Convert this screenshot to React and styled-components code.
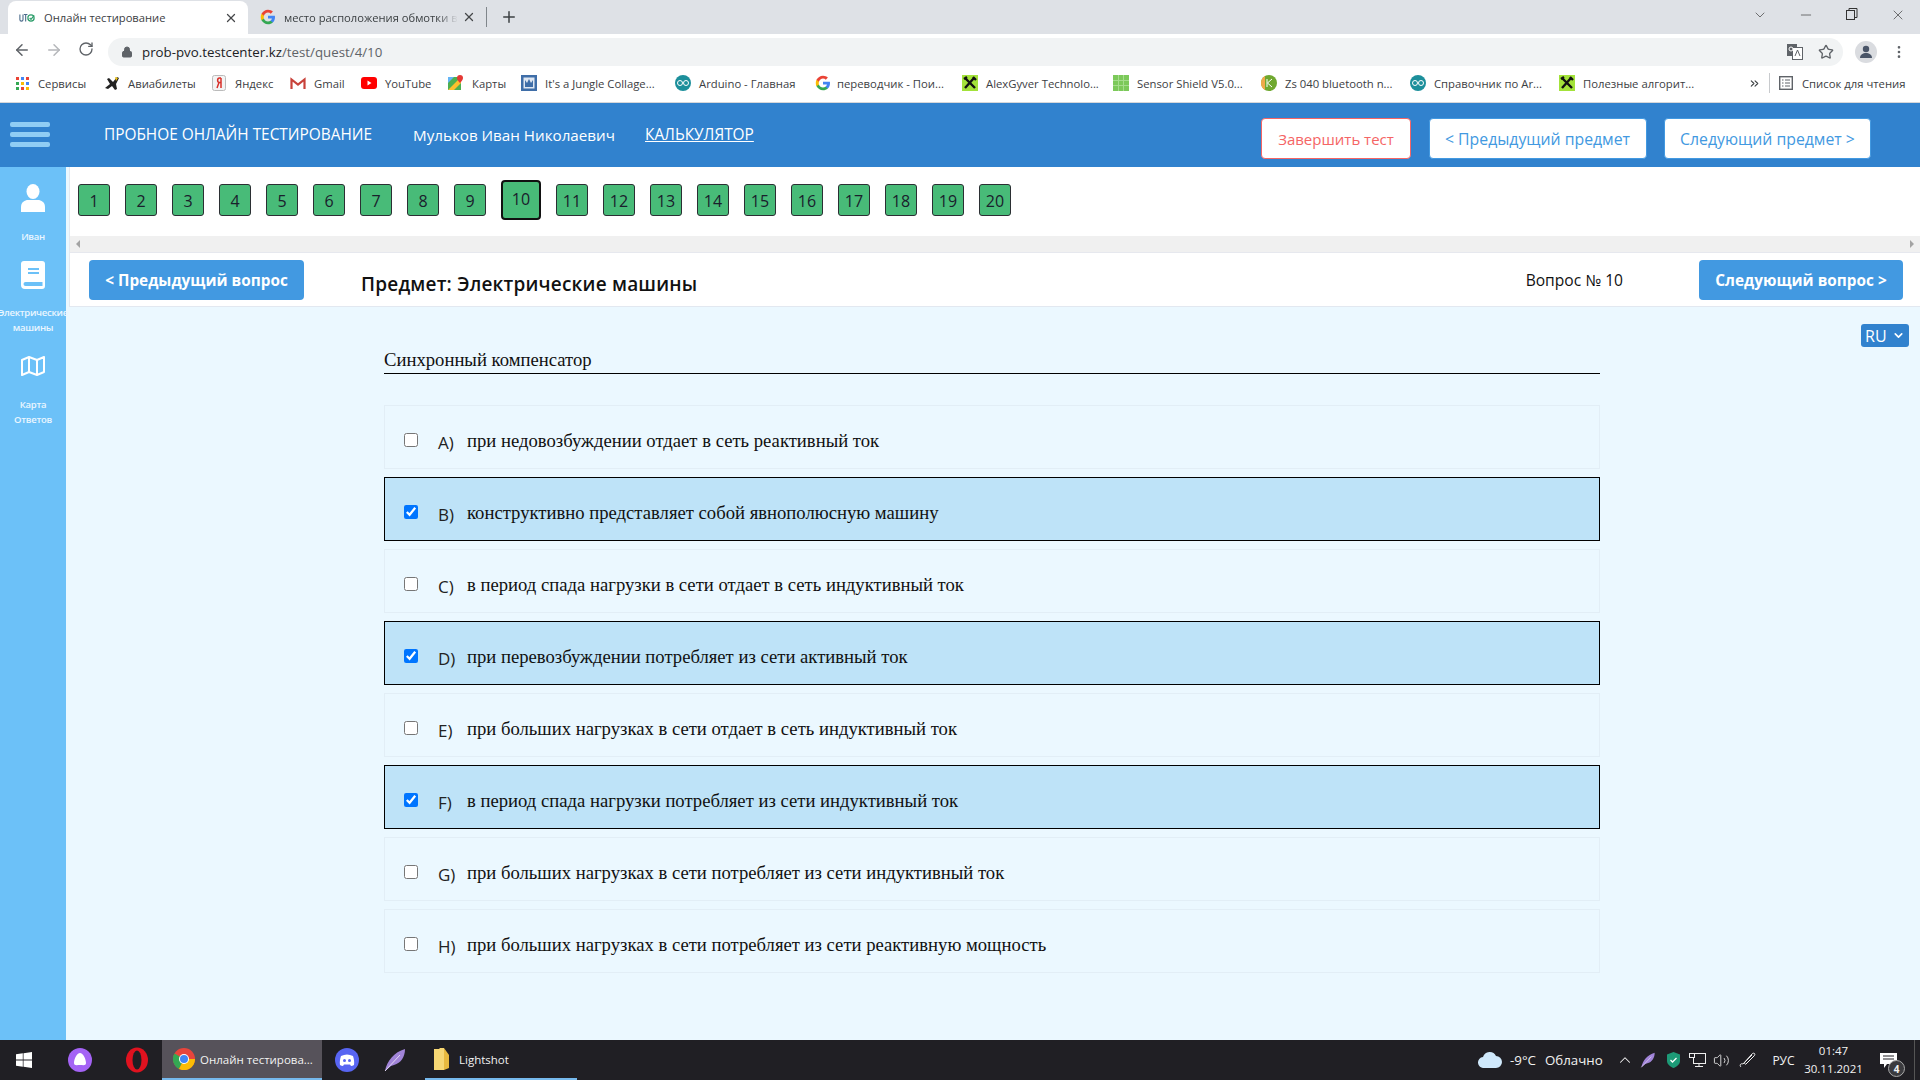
import React from 'react';
import styled, { createGlobalStyle } from 'styled-components';
import { ArrowLeft, ArrowRight, RotateCw, Lock, Star, X, Plus, ChevronDown, Minus, EllipsisVertical, ChevronsRight, ChevronUp, Volume2 } from 'lucide-react';

const Global = createGlobalStyle`
  html, body { margin: 0; padding: 0; width: 1920px; height: 1080px; overflow: hidden; background: #ebf8ff; }
  * { box-sizing: border-box; }
  body { font-family: "Open Sans", "Noto Sans", sans-serif; }
`;

const Page = styled.div`display: flex; flex-direction: column; width: 1920px; height: 1080px; overflow: hidden;`;

/* Browser chrome */
const TabStrip = styled.div`display: flex; align-items: flex-end; height: 34px; background: #dee1e6; padding-left: 8px; color: #3c4043; font-size: 11.2px;`;
const Tab = styled.div`
  display: flex; align-items: center; height: ${p => p.$active ? 33 : 34}px; width: ${p => p.$w}px; padding-left: ${p => p.$pl}px; position: relative;
  background: ${p => p.$active ? '#fff' : 'transparent'}; border-radius: 8px 8px 0 0;
`;
const Favicon = styled.span`display: inline-flex; width: 16px; height: 16px; align-items: center; justify-content: center; flex: none;`;
const TabTitle = styled.span`margin-left: ${p => p.$ml ?? 8}px; white-space: nowrap; flex: 1; min-width: 0; ${p => p.$fade && 'mask-image: linear-gradient(90deg, #000 88%, transparent 100%);'}`;
const TabClose = styled.span`display: inline-flex; width: 16px; margin: 0 8px 0 4px; color: #45474a;`;
const TabSep = styled.span`width: 1px; height: 20px; background: #80868b; margin: 0 13px 7px 0;`;
const NewTab = styled.span`display: inline-flex; margin-bottom: 8px; color: #3c4043;`;
const WindowCtrls = styled.div`margin-left: auto; display: flex; align-self: flex-start; padding-top: 7px; color: #333;`;
const WinBtn = styled.span`display: inline-flex; justify-content: center; width: ${p => p.$w}px;`;

const Toolbar = styled.div`display: flex; align-items: center; height: 32px; background: #fff; color: #5f6368;`;
const NavBtn = styled.span`display: inline-flex; justify-content: center; width: 32px; color: ${p => p.$dim ? '#b5b7ba' : '#5f6368'};`;
const NavGroup = styled.div`display: flex; padding-left: 6px; width: 108px; gap: 0;`;
const Omnibox = styled.div`display: flex; align-items: center; width: 1735px; height: 28px; margin-top: 4px; background: #f1f3f4; border-radius: 14px; padding: 0 9px 0 13px; font-size: 13.3px;`;
const Url = styled.span`margin-left: 9px; color: #5f6368; b { font-weight: 400; color: #202124; }`;
const OmniIcons = styled.div`margin-left: auto; display: flex; align-items: center; gap: 15px;`;
const Avatar = styled.span`display: flex; align-items: center; justify-content: center; width: 22px; height: 22px; border-radius: 50%; background: #dadce0; margin-left: 12px; margin-top: 4px;`;
const Dots = styled.span`display: inline-flex; justify-content: center; width: 32px; margin-top: 4px; margin-left: 6px; color: #5f6368;`;

const Bookmarks = styled.div`display: flex; align-items: center; height: 37px; padding: 0 0 2px 14px; background: #fff; border-bottom: 1px solid #d5d7da; font-size: 11.3px; color: #3c4043;`;
const Bookmark = styled.div`display: flex; align-items: center; width: ${p => p.$w}px; flex: none; white-space: nowrap; overflow: hidden;`;
const BookmarkIcon = styled.span`display: inline-flex; width: 16px; height: 16px; flex: none; margin-right: ${p => p.$mr ?? 8}px; align-items: center; justify-content: center;`;
const BookSep = styled.span`width: 1px; height: 20px; background: #c8cacd; margin: 0 8px 0 8px;`;

/* Site */
const Header = styled.header`display: flex; align-items: center; height: 64px; background: #3182ce; color: #fff; padding: 0 49px 0 10px; font-size: 15.4px;`;
const Burger = styled.div`display: flex; flex-direction: column; gap: 5px; width: 40px; margin-right: 54px; margin-top: -1px; span { display: block; height: 5px; border-radius: 2px; background: #90cdf4; }`;
const HeaderText = styled.span`width: ${p => p.$w}px; flex: none; margin-top: -1px; white-space: nowrap; ${p => p.$link && 'text-decoration: underline;'} ${p => p.$fs && `font-size: ${p.$fs}px;`}`;
const HeaderBtns = styled.div`margin-left: auto; display: flex; gap: 17.5px; margin-top: 7px;`;
const HeaderBtn = styled.button`
  height: 41px; width: ${p => p.$w}px; padding: 1px 0 0; background: #fff; border: 1px solid ${p => p.$danger ? '#f56565' : '#4299e1'}; border-radius: 4px;
  color: ${p => p.$danger ? '#f56565' : '#4299e1'}; font: 400 ${p => p.$danger ? 15 : 15.8}px "Open Sans", sans-serif; white-space: nowrap;
`;

const Body = styled.div`display: flex; flex: 1; min-height: 0;`;
const Sidebar = styled.aside`position: relative; z-index: 1; width: 66px; flex: none; background: #6cc1f8; padding-top: 17px; display: flex; flex-direction: column; align-items: center; gap: 17px; color: #fff;`;
const SideItem = styled.div`display: flex; flex-direction: column; align-items: center; width: 66px;`;
const SideIcon = styled.span`display: flex; align-items: center; justify-content: center; height: 28px; margin-bottom: 16.5px; color: #fff;`;
const SideLabel = styled.span`font-size: 9.5px; line-height: 15px; white-space: nowrap; text-align: center; font-weight: 600; color: #eaf6ff; letter-spacing: -0.3px;`;

const Main = styled.main`flex: 1; min-width: 0; padding-left: 3px; display: flex; flex-direction: column; background: #ebf8ff;`;
const TopPanel = styled.section`border-left: 1px solid #e2e8f0; border-bottom: 1px solid #e2e8f0; background: #fff;`;
const NumberRow = styled.nav`display: flex; align-items: center; gap: 15px; height: 69px; padding: 0 0 3px 8px;`;
const NumberBox = styled.span`
  display: flex; align-items: center; justify-content: center; flex: none;
  width: ${p => p.$current ? 40 : 32}px; height: ${p => p.$current ? 40 : 32}px;
  background: #48bb78; border: ${p => p.$current ? '2px solid #111' : '1px solid #2b2f33'}; border-radius: ${p => p.$current ? 4 : 3}px;
  font-size: 16px; color: #1a202c;
  padding: ${p => p.$current ? '0 0 3px' : '1px 0 0'};
`;
const ScrollBar = styled.div`display: flex; align-items: center; justify-content: space-between; height: 17px; padding: 0 6px; background: #f0f0f0; border-bottom: 1px solid #e6e8ee;`;
const Arrow = styled.span`width: 0; height: 0; border-top: 4px solid transparent; border-bottom: 4px solid transparent; ${p => p.$right ? 'border-left: 4px solid #a3a3a3;' : 'border-right: 4px solid #a3a3a3;'}`;
const SubjectRow = styled.div`display: flex; align-items: flex-start; height: 53px; padding: 7px 17px 0 19px;`;
const PrimaryBtn = styled.button`height: 40px; width: ${p => p.$w}px; border: 0; border-radius: 4px; background: #4299e1; color: #fff; font: 700 15.35px "Open Sans", sans-serif; padding: 0; white-space: nowrap; flex: none;`;
const Subject = styled.h2`margin: 0 0 0 57px; flex: 1; font-size: 19px; font-weight: 600; line-height: 24px; padding-top: 12px; color: #111; letter-spacing: 0.2px; white-space: nowrap;`;
const QuestionNo = styled.span`font-size: 15.6px; line-height: 22px; padding-top: 9px; margin-right: 76px; color: #111;`;

const LangRow = styled.div`display: flex; justify-content: flex-end; padding-right: 11px; margin-top: 17px;`;
const Lang = styled.div`display: flex; align-items: center; justify-content: space-between; width: 48px; height: 23px; padding: 0 4px; background: #3182ce; border-radius: 3px; color: #fff; font-size: 16px;`;
const Quiz = styled.div`margin-left: 315px; width: 1216px;`;
const Title = styled.div`font: 18.67px/26px "Liberation Serif", serif; color: #111; border-bottom: 1.5px solid #000; height: 26.5px;`;
const Options = styled.div`display: flex; flex-direction: column; gap: 8px; margin-top: 31.5px;`;
const Option = styled.label`
  display: flex; align-items: flex-start; height: 64px; padding: 27px 0 0 19px;
  border: ${p => p.$on ? '1.5px solid #000' : '1px solid #e2eef6'}; background: ${p => p.$on ? '#bee3f8' : 'transparent'};
`;
const Check = styled.input`width: 14px; height: 14px; margin: 0 20px 0 0; flex: none;`;
const Letter = styled.span`width: 29px; flex: none; font-size: 17px; line-height: 22px; margin-top: -1.5px; color: #222;`;
const OptionText = styled.span`font: 18.67px/22px "Liberation Serif", serif; color: #111; margin-top: -3px;`;

/* Taskbar */
const Taskbar = styled.footer`display: flex; align-items: stretch; height: 40px; background: #201f24; color: #f2f2f2; font-size: 11.5px;`;
const Slot = styled.div`display: flex; align-items: center; justify-content: ${p => p.$start ? 'flex-start' : 'center'}; width: ${p => p.$w}px; flex: none; white-space: nowrap; font-size: ${p => p.$fs ?? 12}px;`;
const RunApp = styled.div`
  display: flex; align-items: center; width: ${p => p.$w}px; margin-left: ${p => p.$ml ?? 0}px; padding-left: ${p => p.$pl}px; flex: none; gap: ${p => p.$gap}px;
  background: ${p => p.$active ? '#56525a' : 'transparent'}; border-bottom: 2px solid #76b9ed;
`;
const TrayRight = styled.div`margin-left: auto; display: flex; align-items: stretch;`;
const Clock = styled.div`display: flex; flex-direction: column; align-items: center; justify-content: center; width: 57px; font-size: 11.5px; line-height: 18px;`;
const NotifyWrap = styled.div`position: relative; display: flex; align-items: center; justify-content: center; width: 53px; border-right: 1px solid #555;`;
const Badge = styled.span`position: absolute; left: 26px; top: 20px; width: 17px; height: 17px; border-radius: 50%; background: #3b3b3f; border: 1px solid #aaa; font-size: 10px; font-weight: 700; display: flex; align-items: center; justify-content: center;`;

/* drawn icons */
const GoogleG = ({ s = 16 }) => (
  <svg width={s} height={s} viewBox="0 0 48 48"><path fill="#4285F4" d="M45 24.5c0-1.6-.1-3.1-.4-4.5H24v8.5h11.8c-.5 2.8-2 5.1-4.4 6.7v5.500h7.100C42.700 36.800 45 31.200 45 24.500z"/><path fill="#34A853" d="M24 46c5.900 0 10.900-2 14.500-5.300l-7.100-5.500c-2 1.300-4.500 2.100-7.400 2.100-5.700 0-10.500-3.800-12.200-9H4.500v5.700C8.100 41 15.500 46 24 46z"/><path fill="#FBBC05" d="M11.800 28.300c-.9-2.700-.9-5.600 0-8.300v-5.700H4.500c-3 6-3 13.700 0 19.700z"/><path fill="#EA4335" d="M24 10.700c3.200 0 6.100 1.100 8.400 3.300l6.300-6.300C34.900 4.100 29.900 2 24 2 15.500 2 8.100 7 4.500 14.300l7.300 5.700c1.700-5.200 6.500-9.300 12.200-9.300z"/></svg>
);
const UtoIcon = () => (
  <svg width="18" height="12" viewBox="0 0 18 12"><path d="M1 2v6c0 2 3.500 2 3.500 0V2M5.500 2h4M7.500 2v8" fill="none" stroke="#4a6a8a" strokeWidth="1.200"/><circle cx="13.500" cy="6" r="3.500" fill="none" stroke="#2e9e6b" strokeWidth="1.400"/><path d="M12 6l1.500 1.500L17 3" fill="none" stroke="#2e9e6b" strokeWidth="1.400"/></svg>
);
const AppsIcon = () => (
  <svg width="13" height="13" viewBox="0 0 13 13">{[0,1,2].flatMap(r => [0,1,2].map(c => <rect key={`${r}${c}`} x={c*5} y={r*5} width="3" height="3" fill={['#ea4335','#4285f4','#ea4335','#34a853','#fbbc05','#4285f4','#34a853','#ea4335','#fbbc05'][r*3+c]} />))}</svg>
);
const PlaneIcon = () => (<svg width="16" height="16" viewBox="0 0 16 16"><path d="M1 13l5-4-3-5 2-1 4 4 4-5 2 1-3 6 1 5-2 1-3-4-4 3z" fill="#222"/><path d="M11 2l3 1-2 3z" fill="#f2c40f"/></svg>);
const YandexIcon = () => (<svg width="14" height="16" viewBox="0 0 14 16"><rect x=".5" y=".5" width="13" height="15" rx="2" fill="#f3f3f3" stroke="#bbb"/><path d="M9 3v10M9 3H7.500C5 3 5 7.500 7.500 7.500H9M7 7.500L5 13" fill="none" stroke="#d8302a" strokeWidth="1.500"/></svg>);
const GmailIcon = () => (<svg width="16" height="13" viewBox="0 0 16 13"><path d="M1.500 12V2.500L8 7.500l6.500-5V12" fill="none" stroke="#c8423a" strokeWidth="2.200"/></svg>);
const YTIcon = () => (<svg width="16" height="12" viewBox="0 0 16 12"><rect width="16" height="12" rx="3" fill="#f00"/><path d="M6.500 3.500l4 2.500-4 2.500z" fill="#fff"/></svg>);
const MapsIcon = () => (<svg width="16" height="16" viewBox="0 0 16 16"><rect y="2" width="13" height="13" fill="#4caf50"/><path d="M0 15L13 2v6l-7 7z" fill="#fbc02d"/><path d="M0 2h6L0 8z" fill="#64b5f6"/><path d="M12 0a3 3 0 0 1 3 3c0 2-3 5-3 5S9 5 9 3a3 3 0 0 1 3-3z" fill="#e53935"/></svg>);
const JungleIcon = () => (<svg width="16" height="16" viewBox="0 0 16 16"><rect width="16" height="16" fill="#3f6ea8"/><rect x="2.500" y="2.500" width="11" height="11" fill="#dfe7f2"/><path d="M4 12V5l2 3 2-4 2 4 2-3v7z" fill="#3f6ea8"/></svg>);
const ArduinoIcon = () => (<svg width="16" height="16" viewBox="0 0 16 16"><circle cx="8" cy="8" r="8" fill="#1c8f9b"/><circle cx="5" cy="8" r="2.500" fill="none" stroke="#fff"/><circle cx="11" cy="8" r="2.500" fill="none" stroke="#fff"/></svg>);
const GyverIcon = () => (<svg width="16" height="16" viewBox="0 0 16 16"><rect width="16" height="16" fill="#a3e23a"/><path d="M3 13L12 3M3 3l10 10" stroke="#111" strokeWidth="2.400"/><path d="M2 4l3-2M11 2l3 3" stroke="#111" strokeWidth="2.400"/></svg>);
const ShieldGridIcon = () => (<svg width="16" height="16" viewBox="0 0 16 16"><rect width="16" height="16" fill="#7cc95a"/><path d="M5.500 0v16M10.500 0v16M0 5.500h16M0 10.500h16" stroke="#a5dd8c"/></svg>);
const KIcon = () => (<svg width="16" height="16" viewBox="0 0 16 16"><circle cx="8" cy="8" r="8" fill="#6fa82f"/><path d="M0 8a8 8 0 0 1 4-7v14a8 8 0 0 1-4-7z" fill="#f0a94a"/><path d="M6 4v8M11 4L6.500 8l4.500 4" fill="none" stroke="#fff"/></svg>);
const ReadIcon = () => (<svg width="14" height="14" viewBox="0 0 14 14"><rect x=".7" y=".7" width="12.600" height="12.600" fill="none" stroke="#5f6368" strokeWidth="1.400"/><path d="M3 4h1.500M6 4h5M3 7h1.500M6 7h5M3 10h1.500M6 10h5" stroke="#5f6368"/></svg>);
const TranslateIcon = () => (<svg width="16" height="16" viewBox="0 0 16 16"><rect x="0" y="0" width="10" height="12" fill="#5f6368"/><rect x="5.500" y="3.500" width="10" height="12" fill="#fff" stroke="#5f6368"/><path d="M8 12l2.500-6 2.500 6" fill="none" stroke="#5f6368"/><circle cx="4" cy="5" r="2" fill="none" stroke="#fff"/></svg>);
const UserSmall = () => (<svg width="14" height="14" viewBox="0 0 14 14"><circle cx="7" cy="4" r="3.200" fill="#4a5568"/><path d="M1 13c0-3.500 3-5 6-5s6 1.500 6 5z" fill="#4a5568"/></svg>);
const SideUser = () => (<svg width="24" height="28" viewBox="0 0 24 28"><ellipse cx="12" cy="7.500" rx="6.500" ry="7.500" fill="#fff"/><path d="M0 28v-5c0-5 4-7 7-7h10c3 0 7 2 7 7v5z" fill="#fff" /></svg>);
const SideBook = () => (<svg width="24" height="28" viewBox="0 0 24 28"><path d="M3 0h18a3 3 0 0 1 3 3v22a3 3 0 0 1-3 3H4a4 4 0 0 1-4-4V3a3 3 0 0 1 3-3z" fill="#fff"/><path d="M7 8h11M7 12h11" stroke="#6cc1f8" strokeWidth="2"/><path d="M21.500 21H4.500a1.800 1.800 0 0 0 0 4h17z" fill="#6cc1f8"/></svg>);
const SideMap = () => (<svg width="24" height="20" viewBox="0 0 24 20" fill="none" stroke="#fff" strokeWidth="2" strokeLinejoin="round"><path d="M1 4l7-3 8 3 7-3v15l-7 3-8-3-7 3z"/><path d="M8 1v15M16 4v15"/></svg>);
const WinLogo = () => (<svg width="16" height="16" viewBox="0 0 16 16"><path d="M0 2.300l6.800-1v6.300H0zM7.500 1.200L16 0v7.600H7.500zM0 8.400h6.800v6.300L0 13.700zM7.500 8.400H16V16l-8.500-1.200z" fill="#fff"/></svg>);
const Alisa = () => (<svg width="24" height="24" viewBox="0 0 24 24"><circle cx="12" cy="12" r="12" fill="#a463f5"/><path d="M12 5c-3 0-6 6-6 10 0 3 3 2 6 2s6 1 6-2c0-4-3-10-6-10z" fill="#fff"/></svg>);
const Opera = () => (<svg width="24" height="26" viewBox="0 0 24 26"><ellipse cx="12" cy="13" rx="11" ry="12.500" fill="#e0121f"/><ellipse cx="12" cy="13" rx="4.500" ry="9.500" fill="#201f24"/></svg>);
const ChromeLogo = () => (<svg width="22" height="22" viewBox="0 0 22 22"><circle cx="11" cy="11" r="11" fill="#e8453c"/><path d="M11 11L1.500 5.500A11 11 0 0 0 6 21z" fill="#34a853"/><path d="M11 11l-5 10a11 11 0 0 0 16-10z" fill="#fbbc05"/><circle cx="11" cy="11" r="5" fill="#fff"/><circle cx="11" cy="11" r="4" fill="#4285f4"/></svg>);
const Discord = () => (<svg width="24" height="24" viewBox="0 0 24 24"><circle cx="12" cy="12" r="12" fill="#5865f2"/><path d="M6 8c4-2 8-2 12 0 1 3 1.500 6 1 9-1 .7-2 1-3 1l-1-1.500H9L8 18c-1 0-2-.3-3-1-.5-3 0-6 1-9z" fill="#fff"/><circle cx="9.500" cy="12.500" r="1.500" fill="#5865f2"/><circle cx="14.500" cy="12.500" r="1.500" fill="#5865f2"/></svg>);
const Feather = ({ s = 24 }) => (<svg width={s} height={s} viewBox="0 0 24 24"><path d="M2 23C4 13 11 4 22 1c0 8-4 14-11 16l-3 1z" fill="#a184d8"/><path d="M2 23L17 7" stroke="#e4d8f5" strokeWidth="1"/></svg>);
const Folder = () => (<svg width="16" height="24" viewBox="0 0 16 24"><path d="M0 2h5l1-1h4v22H0z" fill="#f7d774"/><path d="M10 1v22l5-2V8z" fill="#e8b93f"/></svg>);
const Cloud = () => (<svg width="24" height="16" viewBox="0 0 24 16"><path d="M6 16a5.500 5.500 0 0 1-1-11 7 7 0 0 1 13-1 6 6 0 0 1 0 12z" fill="#cfe8fb"/></svg>);
const ShieldKas = () => (<svg width="13" height="16" viewBox="0 0 13 16"><path d="M6.500 0L13 2.500V9c0 3-3 5.500-6.500 7C3 14.500 0 12 0 9V2.500z" fill="#1d9a77"/><path d="M3.500 8l2 2 4-4" fill="none" stroke="#fff" strokeWidth="1.300"/></svg>);
const Pen = () => (<svg width="18" height="18" viewBox="0 0 18 18" fill="none" stroke="#eee"><path d="M2 16c-2-2 0-4 2-3l9-10c2-2 4 0 2 2L7 13c-1 1-2-1-1-2l7-7"/></svg>);
const NetIcon = () => (<svg width="17" height="16" viewBox="0 0 17 16" fill="none" stroke="#eee"><rect x="4.500" y="1.500" width="12" height="10"/><path d="M10 11.500v3M6 14.500h8"/><rect x=".5" y="1.500" width="5" height="4" fill="#201f24"/></svg>);
const Message = () => (<svg width="17" height="15" viewBox="0 0 17 15"><path d="M0 0h17v11H7l-3 4v-4H0z" fill="#fff"/><path d="M3 3h11M3 6h11" stroke="#201f24"/></svg>);

const bookmarks = [
  { w: 90, icon: <AppsIcon />, t: 'Сервисы', mr: 8 },
  { w: 107, icon: <PlaneIcon />, t: 'Авиабилеты' },
  { w: 79, icon: <YandexIcon />, t: 'Яндекс' },
  { w: 71, icon: <GmailIcon />, t: 'Gmail' },
  { w: 87, icon: <YTIcon />, t: 'YouTube' },
  { w: 73, icon: <MapsIcon />, t: 'Карты' },
  { w: 154, icon: <JungleIcon />, t: "It's a Jungle Collage..." },
  { w: 140, icon: <ArduinoIcon />, t: 'Arduino - Главная' },
  { w: 147, icon: <GoogleG />, t: 'переводчик - Пои...', mr: 6 },
  { w: 151, icon: <GyverIcon />, t: 'AlexGyver Technolo...' },
  { w: 148, icon: <ShieldGridIcon />, t: 'Sensor Shield V5.0...' },
  { w: 149, icon: <KIcon />, t: 'Zs 040 bluetooth n...' },
  { w: 149, icon: <ArduinoIcon />, t: 'Справочник по Ar...' },
  { w: 189, icon: <GyverIcon />, t: 'Полезные алгорит...', mr: 8 },
];

const numbers = Array.from({ length: 20 }, (_, i) => i + 1);

const options = [
  ['A)', 'при недовозбуждении отдает в сеть реактивный ток', false],
  ['B)', 'конструктивно представляет собой явнополюсную машину', true],
  ['C)', 'в период спада нагрузки в сети отдает в сеть индуктивный ток', false],
  ['D)', 'при перевозбуждении потребляет из сети активный ток', true],
  ['E)', 'при больших нагрузках в сети отдает в сеть индуктивный ток', false],
  ['F)', 'в период спада нагрузки потребляет из сети индуктивный ток', true],
  ['G)', 'при больших нагрузках в сети потребляет из сети индуктивный ток', false],
  ['H)', 'при больших нагрузках в сети потребляет из сети реактивную мощность', false],
];

export default function App() {
  return (
    <Page>
      <Global />
      <TabStrip>
        <Tab $active $w={240} $pl={11}>
          <Favicon><UtoIcon /></Favicon>
          <TabTitle $ml={9}>Онлайн тестирование</TabTitle>
          <TabClose><X size={14} strokeWidth={2.2} /></TabClose>
        </Tab>
        <Tab $w={238} $pl={12}>
          <Favicon><GoogleG /></Favicon>
          <TabTitle $fade>место расположения обмотки в</TabTitle>
          <TabClose><X size={14} strokeWidth={2.2} /></TabClose>
        </Tab>
        <TabSep />
        <NewTab><Plus size={18} strokeWidth={2} /></NewTab>
        <WindowCtrls>
          <WinBtn $w={45}><ChevronDown size={16} strokeWidth={1} /></WinBtn>
          <WinBtn $w={47}><Minus size={16} strokeWidth={1} /></WinBtn>
          <WinBtn $w={46}>
            <svg width="12" height="14" viewBox="0 0 12 14" fill="none" stroke="#333"><rect x=".5" y="3.500" width="8" height="9"/><path d="M3 3.500V1.500h8v9H8.500"/></svg>
          </WinBtn>
          <WinBtn $w={45}><X size={16} strokeWidth={1} /></WinBtn>
        </WindowCtrls>
      </TabStrip>
      <Toolbar>
        <NavGroup>
          <NavBtn><ArrowLeft size={18} /></NavBtn>
          <NavBtn $dim><ArrowRight size={18} /></NavBtn>
          <NavBtn><RotateCw size={16} /></NavBtn>
        </NavGroup>
        <Omnibox>
          <Lock size={12} fill="#5f6368" />
          <Url><b>prob-pvo.testcenter.kz</b>/test/quest/4/10</Url>
          <OmniIcons>
            <TranslateIcon />
            <Star size={16} />
          </OmniIcons>
        </Omnibox>
        <Avatar><UserSmall /></Avatar>
        <Dots><EllipsisVertical size={16} /></Dots>
      </Toolbar>
      <Bookmarks>
        {bookmarks.map(b => (
          <Bookmark key={b.t} $w={b.w}>
            <BookmarkIcon $mr={b.mr}>{b.icon}</BookmarkIcon>{b.t}
          </Bookmark>
        ))}
        <ChevronsRight size={13} />
        <BookSep />
        <BookmarkIcon $mr={8}><ReadIcon /></BookmarkIcon>
        <span>Список для чтения</span>
      </Bookmarks>

      <Header>
        <Burger><span /><span /><span /></Burger>
        <HeaderText $w={309}>ПРОБНОЕ ОНЛАЙН ТЕСТИРОВАНИЕ</HeaderText>
        <HeaderText $w={232} $fs={15.2}>Мульков Иван Николаевич</HeaderText>
        <HeaderText $link>КАЛЬКУЛЯТОР</HeaderText>
        <HeaderBtns>
          <HeaderBtn $danger $w={150}>Завершить тест</HeaderBtn>
          <HeaderBtn $w={218}>&lt; Предыдущий предмет</HeaderBtn>
          <HeaderBtn $w={207}>Следующий предмет &gt;</HeaderBtn>
        </HeaderBtns>
      </Header>

      <Body>
        <Sidebar>
          <SideItem><SideIcon><SideUser /></SideIcon><SideLabel>Иван</SideLabel></SideItem>
          <SideItem><SideIcon><SideBook /></SideIcon><SideLabel>Электрические</SideLabel><SideLabel>машины</SideLabel></SideItem>
          <SideItem><SideIcon><SideMap /></SideIcon><SideLabel>Карта</SideLabel><SideLabel>Ответов</SideLabel></SideItem>
        </Sidebar>
        <Main>
          <TopPanel>
            <NumberRow>
              {numbers.map(n => <NumberBox key={n} $current={n === 10}>{n}</NumberBox>)}
            </NumberRow>
            <ScrollBar><Arrow /><Arrow $right /></ScrollBar>
            <SubjectRow>
              <PrimaryBtn $w={215}>&lt; Предыдущий вопрос</PrimaryBtn>
              <Subject>Предмет: Электрические машины</Subject>
              <QuestionNo>Вопрос № 10</QuestionNo>
              <PrimaryBtn $w={204}>Следующий вопрос &gt;</PrimaryBtn>
            </SubjectRow>
          </TopPanel>
          <LangRow><Lang>RU<ChevronDown size={13} strokeWidth={3} /></Lang></LangRow>
          <Quiz>
            <Title>Синхронный компенсатор</Title>
            <Options>
              {options.map(([l, t, on]) => (
                <Option key={l} $on={on}>
                  <Check type="checkbox" checked={on} readOnly />
                  <Letter>{l}</Letter>
                  <OptionText>{t}</OptionText>
                </Option>
              ))}
            </Options>
          </Quiz>
        </Main>
      </Body>

      <Taskbar>
        <Slot $w={48}><WinLogo /></Slot>
        <Slot $w={64}><Alisa /></Slot>
        <Slot $w={50}><Opera /></Slot>
        <RunApp $active $w={160} $pl={11} $gap={5}><ChromeLogo /><span>Онлайн тестирова...</span></RunApp>
        <Slot $w={50}><Discord /></Slot>
        <Slot $w={46}><Feather /></Slot>
        <RunApp $w={152} $ml={7} $pl={9} $gap={9}><Folder /><span>Lightshot</span></RunApp>
        <TrayRight>
          <Slot $w={32} $start><Cloud /></Slot>
          <Slot $w={35} $start $fs={13.3}>-9°C</Slot>
          <Slot $w={70} $start $fs={13.3}>Облачно</Slot>
          <Slot $w={20}><ChevronUp size={18} strokeWidth={1.4} /></Slot>
          <Slot $w={26}><Feather s={16} /></Slot>
          <Slot $w={24}><ShieldKas /></Slot>
          <Slot $w={24}><NetIcon /></Slot>
          <Slot $w={24}><Volume2 size={17} strokeWidth={1.2} /></Slot>
          <Slot $w={29}><Pen /></Slot>
          <Slot $w={43}>РУС</Slot>
          <Clock><span>01:47</span><span>30.11.2021</span></Clock>
          <NotifyWrap><Message /><Badge>4</Badge></NotifyWrap>
          <Slot $w={5} />
        </TrayRight>
      </Taskbar>
    </Page>
  );
}
